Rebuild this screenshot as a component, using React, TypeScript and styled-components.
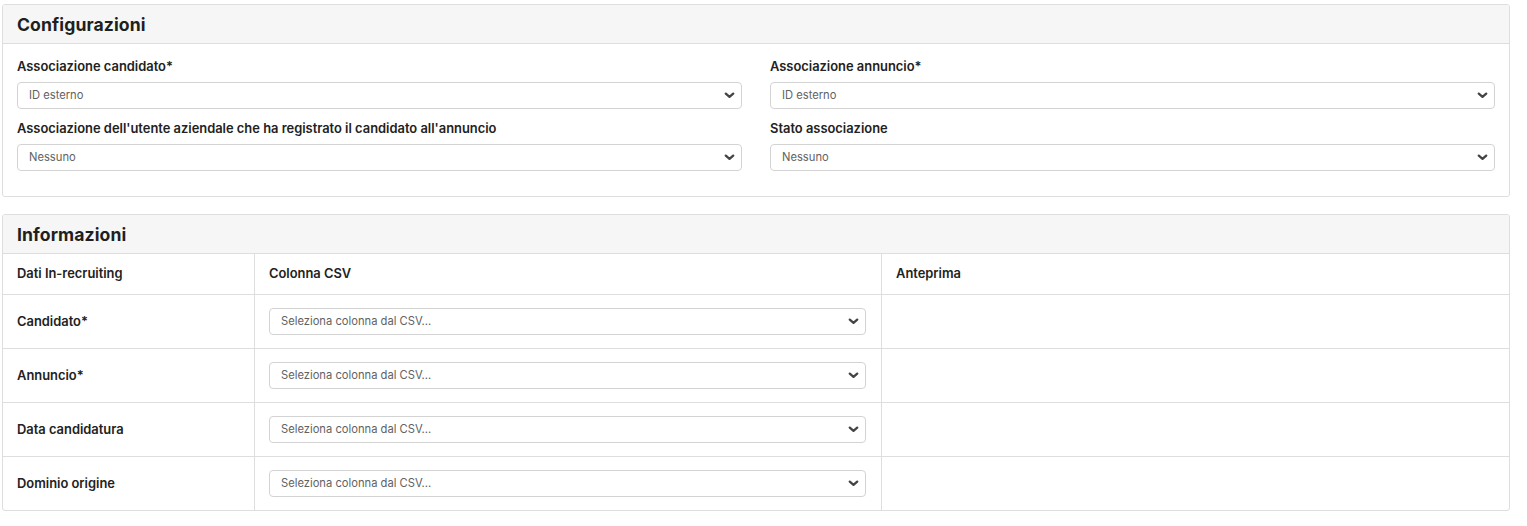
import React from "react";
import styled, { createGlobalStyle } from "styled-components";

const GlobalStyle = createGlobalStyle`
  body {
    margin: 0;
    background: #ffffff;
    font-family: "Inter", "Noto Sans", sans-serif;
    color: #222222;
  }
`;

const configFields = [
  { label: "Associazione candidato*", value: "ID esterno" },
  { label: "Associazione annuncio*", value: "ID esterno" },
  { label: "Associazione dell'utente aziendale che ha registrato il candidato all'annuncio", value: "Nessuno" },
  { label: "Stato associazione", value: "Nessuno" },
];

const infoRows = ["Candidato*", "Annuncio*", "Data candidatura", "Dominio origine"];

const Chevron = () => (
  <svg width="11" height="7" viewBox="0 0 11 7" fill="none">
    <path d="M1.8 1.6l3.7 3.3 3.7-3.3" stroke="#444" strokeWidth="2.3" strokeLinecap="round" strokeLinejoin="round" />
  </svg>
);

const SelectField = ({ value }: { value: string }) => (
  <SelectBox>
    <SelectValue>{value}</SelectValue>
    <Chevron />
  </SelectBox>
);

export default function App() {
  return (
    <>
      <GlobalStyle />
      <Page>
        <Card>
          <CardHeader>
            <Title>Configurazioni</Title>
          </CardHeader>
          <ConfigGrid>
            {configFields.map((f) => (
              <Field key={f.label}>
                <Label>{f.label}</Label>
                <SelectField value={f.value} />
              </Field>
            ))}
          </ConfigGrid>
        </Card>

        <Card>
          <CardHeader>
            <Title>Informazioni</Title>
          </CardHeader>
          <Table>
            <HeadRow>
              <Cell>
                <Label>Dati In-recruiting</Label>
              </Cell>
              <Cell>
                <Label>Colonna CSV</Label>
              </Cell>
              <Cell>
                <Label>Anteprima</Label>
              </Cell>
            </HeadRow>
            {infoRows.map((r) => (
              <BodyRow key={r}>
                <Cell>
                  <Label>{r}</Label>
                </Cell>
                <Cell>
                  <SelectField value="Seleziona colonna dal CSV..." />
                </Cell>
                <Cell />
              </BodyRow>
            ))}
          </Table>
        </Card>
      </Page>
    </>
  );
}

const Page = styled.div`
  display: flex;
  flex-direction: column;
  gap: 17px;
  padding: 4px 17px 0 2px;
`;

const Card = styled.section`
  border: 1px solid #dedede;
  border-radius: 3px;
  background: #fff;
  overflow: hidden;
`;

const CardHeader = styled.div`
  background: #f6f6f6;
  border-bottom: 1px solid #dedede;
  height: 38px;
  display: flex;
  align-items: center;
  padding: 0 14px;
`;

const Title = styled.h2`
  margin: 0;
  font-size: 17.6px;
  font-weight: 700;
  color: #1f1f1f;
  letter-spacing: 0.1px;
`;

const ConfigGrid = styled.div`
  display: grid;
  grid-template-columns: 1fr 1fr;
  column-gap: 28px;
  row-gap: 11px;
  padding: 14px 14px 25px;
`;

const Field = styled.div`
  display: flex;
  flex-direction: column;
  gap: 6px;
`;

const Label = styled.div`
  font-size: 12.9px;
  font-weight: 600;
  line-height: 18px;
  color: #222;
  white-space: nowrap;
`;

const SelectBox = styled.div`
  box-sizing: border-box;
  height: 27px;
  border: 1px solid #d3d3d3;
  border-radius: 4px;
  background: #fff;
  display: flex;
  align-items: center;
  justify-content: space-between;
  padding: 0 6px 0 11px;
`;

const SelectValue = styled.span`
  font-size: 11.2px;
  color: #626262;
  margin-top: -1px;
`;

const Table = styled.div`
  display: flex;
  flex-direction: column;
`;

const Row = styled.div`
  display: grid;
  grid-template-columns: 251px 627px 1fr;
  & + & {
    border-top: 1px solid #dedede;
  }
`;

const HeadRow = styled(Row)`
  height: 40px;
`;

const BodyRow = styled(Row)`
  height: 53px;
`;

const Cell = styled.div`
  display: flex;
  flex-direction: column;
  justify-content: center;
  padding: 0 15px 0 14px;
  & + & {
    border-left: 1px solid #dedede;
  }
`;
